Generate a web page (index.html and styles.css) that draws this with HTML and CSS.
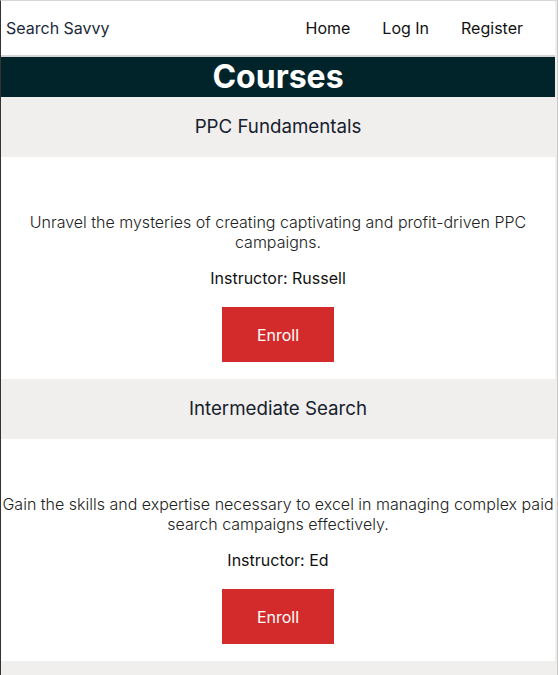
FILE: index.html
```html
<!DOCTYPE html>
<html lang="en">
<head>
<meta charset="utf-8">
<title>Search Savvy - Courses</title>
<link rel="stylesheet" href="styles.css">
</head>
<body>
<div class="page">
  <header class="site-header">
    <a class="brand" href="#">Search Savvy</a>
    <nav class="nav">
      <a href="#">Home</a>
      <a href="#">Log In</a>
      <a href="#">Register</a>
    </nav>
  </header>
  <h1 class="page-title">Courses</h1>
  <section class="course">
    <h2 class="course-title">PPC Fundamentals</h2>
    <div class="course-body">
      <p class="course-desc">Unravel the mysteries of creating captivating and profit-driven PPC campaigns.</p>
      <p class="course-instructor">Instructor: Russell</p>
      <button class="enroll">Enroll</button>
    </div>
  </section>
  <section class="course">
    <h2 class="course-title">Intermediate Search</h2>
    <div class="course-body">
      <p class="course-desc">Gain the skills and expertise necessary to excel in managing complex paid search campaigns effectively.</p>
      <p class="course-instructor">Instructor: Ed</p>
      <button class="enroll">Enroll</button>
    </div>
  </section>
</div>
</body>
</html>
```
FILE: styles.css
```css
html {
  background: #f0efed;
}
body {
  margin: 0;
  background: #f0efed;
  border-top: 1px solid #d6d6d6;
  border-left: 1px solid #333;
  border-right: 1px solid #c8c8c8;
  font-family: Inter, "Noto Sans", sans-serif;
  min-height: 675px;
  box-sizing: border-box;
}
.page {
  margin-right: 2px;
}
.site-header {
  display: flex;
  align-items: center;
  justify-content: space-between;
  height: 54px;
  background: #fff;
  border-bottom: 2px solid #d4d4d4;
  padding-left: 5px;
}
.brand {
  color: #1b2a3a;
  text-decoration: none;
  font-size: 16px;
  padding-bottom: 1px;
}
.nav {
  display: flex;
  padding-right: 16px;
  padding-bottom: 1px;
}
.nav a {
  padding: 0 16px;
  color: #111;
  text-decoration: none;
  font-size: 16px;
}
.page-title {
  margin: 0;
  background: #00242a;
  color: #fff;
  text-align: center;
  font-size: 32px;
  font-weight: 700;
  line-height: 40px;
  height: 40px;
}
.course-title {
  margin: 0;
  height: 60px;
  line-height: 60px;
  text-align: center;
  font-size: 18.72px;
  font-weight: 400;
  color: #17212e;
  background: #f0efed;
}
.course-body {
  background: #fff;
  text-align: center;
  padding: 55px 0 17px;
}
.course-desc {
  margin: 0 0 16px;
  font-size: 16px;
  line-height: 20px;
  font-weight: 300;
  color: #222;
}
.course-instructor {
  margin: 0 0 19px;
  font-size: 16px;
  line-height: 20px;
  color: #111;
}
.enroll {
  width: 112px;
  height: 55px;
  border: none;
  border-radius: 0;
  background: #d32b2b;
  color: #fff;
  font-family: Inter, "Noto Sans", sans-serif;
  font-size: 16px;
  cursor: pointer;
}
```
